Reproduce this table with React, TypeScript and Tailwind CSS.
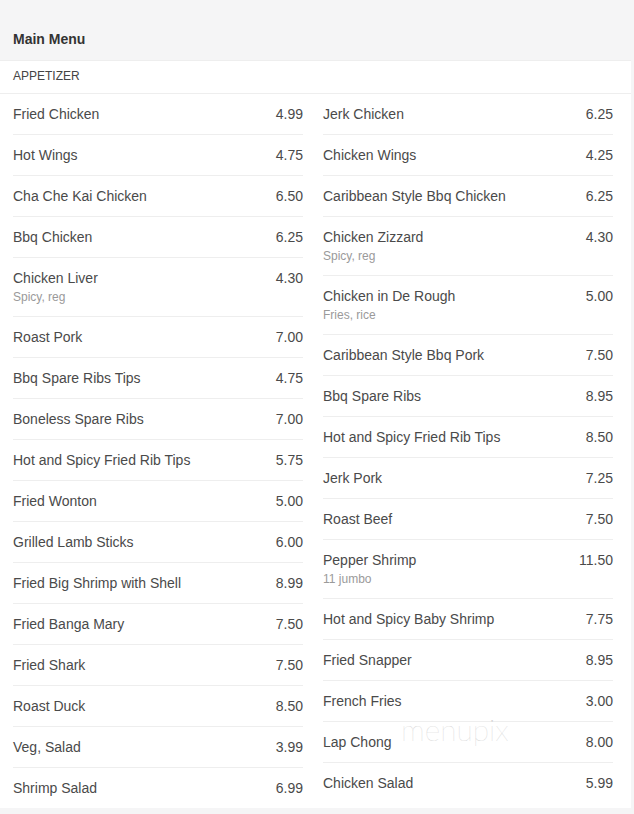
import React from 'react';

type Item = { name: string; price: string; note?: string };

const left: Item[] = [
  { name: 'Fried Chicken', price: '4.99' },
  { name: 'Hot Wings', price: '4.75' },
  { name: 'Cha Che Kai Chicken', price: '6.50' },
  { name: 'Bbq Chicken', price: '6.25' },
  { name: 'Chicken Liver', price: '4.30', note: 'Spicy, reg' },
  { name: 'Roast Pork', price: '7.00' },
  { name: 'Bbq Spare Ribs Tips', price: '4.75' },
  { name: 'Boneless Spare Ribs', price: '7.00' },
  { name: 'Hot and Spicy Fried Rib Tips', price: '5.75' },
  { name: 'Fried Wonton', price: '5.00' },
  { name: 'Grilled Lamb Sticks', price: '6.00' },
  { name: 'Fried Big Shrimp with Shell', price: '8.99' },
  { name: 'Fried Banga Mary', price: '7.50' },
  { name: 'Fried Shark', price: '7.50' },
  { name: 'Roast Duck', price: '8.50' },
  { name: 'Veg, Salad', price: '3.99' },
  { name: 'Shrimp Salad', price: '6.99' },
];

const right: Item[] = [
  { name: 'Jerk Chicken', price: '6.25' },
  { name: 'Chicken Wings', price: '4.25' },
  { name: 'Caribbean Style Bbq Chicken', price: '6.25' },
  { name: 'Chicken Zizzard', price: '4.30', note: 'Spicy, reg' },
  { name: 'Chicken in De Rough', price: '5.00', note: 'Fries, rice' },
  { name: 'Caribbean Style Bbq Pork', price: '7.50' },
  { name: 'Bbq Spare Ribs', price: '8.95' },
  { name: 'Hot and Spicy Fried Rib Tips', price: '8.50' },
  { name: 'Jerk Pork', price: '7.25' },
  { name: 'Roast Beef', price: '7.50' },
  { name: 'Pepper Shrimp', price: '11.50', note: '11 jumbo' },
  { name: 'Hot and Spicy Baby Shrimp', price: '7.75' },
  { name: 'Fried Snapper', price: '8.95' },
  { name: 'French Fries', price: '3.00' },
  { name: 'Lap Chong', price: '8.00' },
  { name: 'Chicken Salad', price: '5.99' },
];

function Column({ items }: { items: Item[] }) {
  return (
    <div className="flex flex-col">
      {items.map((it, i) => (
        <div
          key={it.name + i}
          className={
            'flex justify-between py-[10px] ' +
            (i < items.length - 1 ? 'border-b border-[#eeeeee]' : '')
          }
        >
          <div className="flex flex-col">
            <span className="text-[14px] leading-[20px] text-[#4a4a4a]">{it.name}</span>
            {it.note && <span className="text-[12px] leading-[18px] text-[#9a9a9a]">{it.note}</span>}
          </div>
          <span className="text-[14px] leading-[20px] text-[#4a4a4a]">{it.price}</span>
        </div>
      ))}
    </div>
  );
}

export default function App() {
  return (
    <div
      className="min-h-screen w-[634px] bg-[#f5f5f6] pr-[3px]"
      style={{ fontFamily: '"Liberation Sans", Arial, sans-serif' }}
    >
      <div className="pl-[13px] pt-[29px] pb-[11px] text-[14px] leading-[20px] font-bold text-[#333]">
        Main Menu
      </div>
      <div className="relative bg-white">
        <div className="border-t border-b border-[#eeeeee] pl-[13px] pt-[6px] pb-[8px] text-[12px] leading-[18px] text-[#444] uppercase">
          Appetizer
        </div>
        <div className="grid grid-cols-[290px_290px] gap-x-[20px] pl-[13px] pr-[18px]">
          <Column items={left} />
          <Column items={right} />
        </div>
        {/* watermark */}
        <div
          className="pointer-events-none absolute left-[401px] top-[654px] text-[30px] leading-none font-thin text-[#d2d2d2]"
          style={{ fontFamily: 'Lato, "Open Sans", sans-serif' }}
        >
          menupix
        </div>
      </div>
    </div>
  );
}
